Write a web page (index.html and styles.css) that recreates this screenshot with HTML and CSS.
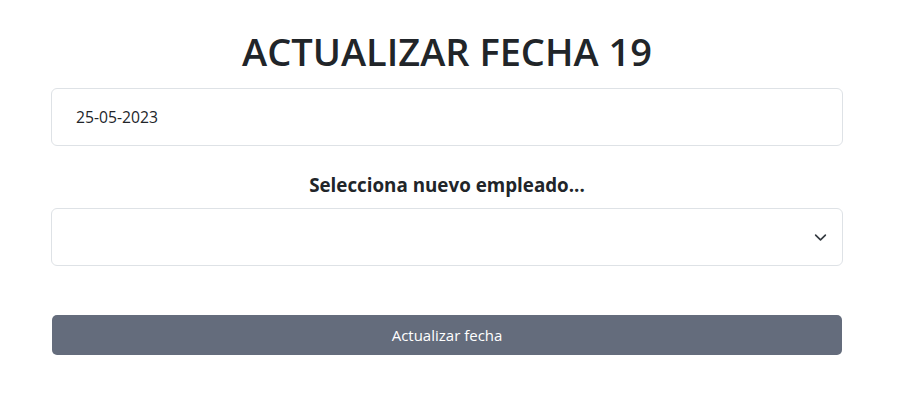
FILE: index.html
```html
<!DOCTYPE html>
<html lang="es">
<head>
<meta charset="utf-8">
<link rel="stylesheet" href="styles.css">
</head>
<body>
<div class="container">
  <h1 class="title">ACTUALIZAR FECHA 19</h1>
  <div class="field">25-05-2023</div>
  <label class="label">Selecciona nuevo empleado...</label>
  <div class="field select">
    <svg class="chev" width="13" height="13" viewBox="0 0 16 16"><path d="M2 5l6 6 6-6" fill="none" stroke="#343a40" stroke-width="2" stroke-linecap="round" stroke-linejoin="round"/></svg>
  </div>
  <button class="btn">Actualizar fecha</button>
</div>
</body>
</html>
```
FILE: styles.css
```css
* { box-sizing: border-box; }
body {
  margin: 0;
  background: #fff;
  font-family: "Open Sans", "Noto Sans", sans-serif;
  color: #212529;
}
.container {
  width: 792px;
  margin: 0 0 0 51px;
  display: flex;
  flex-direction: column;
}
.title {
  margin: 26px 0 0;
  height: 62px;
  text-align: center;
  font-size: 38px;
  font-weight: 600;
  line-height: 50px;
}
.field {
  height: 58px;
  border: 1px solid #dee2e6;
  border-radius: 6px;
  padding: 0 24px;
  display: flex;
  align-items: center;
  font-size: 15.7px;
}
.label {
  margin-top: 27px;
  height: 35px;
  text-align: center;
  font-weight: 700;
  font-size: 18.8px;
  line-height: 25px;
}
.select {
  justify-content: flex-end;
  padding-right: 15px;
}
.btn {
  margin: 49px 1px 0;
  height: 40px;
  border: none;
  border-radius: 5px;
  background: #646c7c;
  color: #fff;
  font-family: inherit;
  font-size: 15px;
}
```
